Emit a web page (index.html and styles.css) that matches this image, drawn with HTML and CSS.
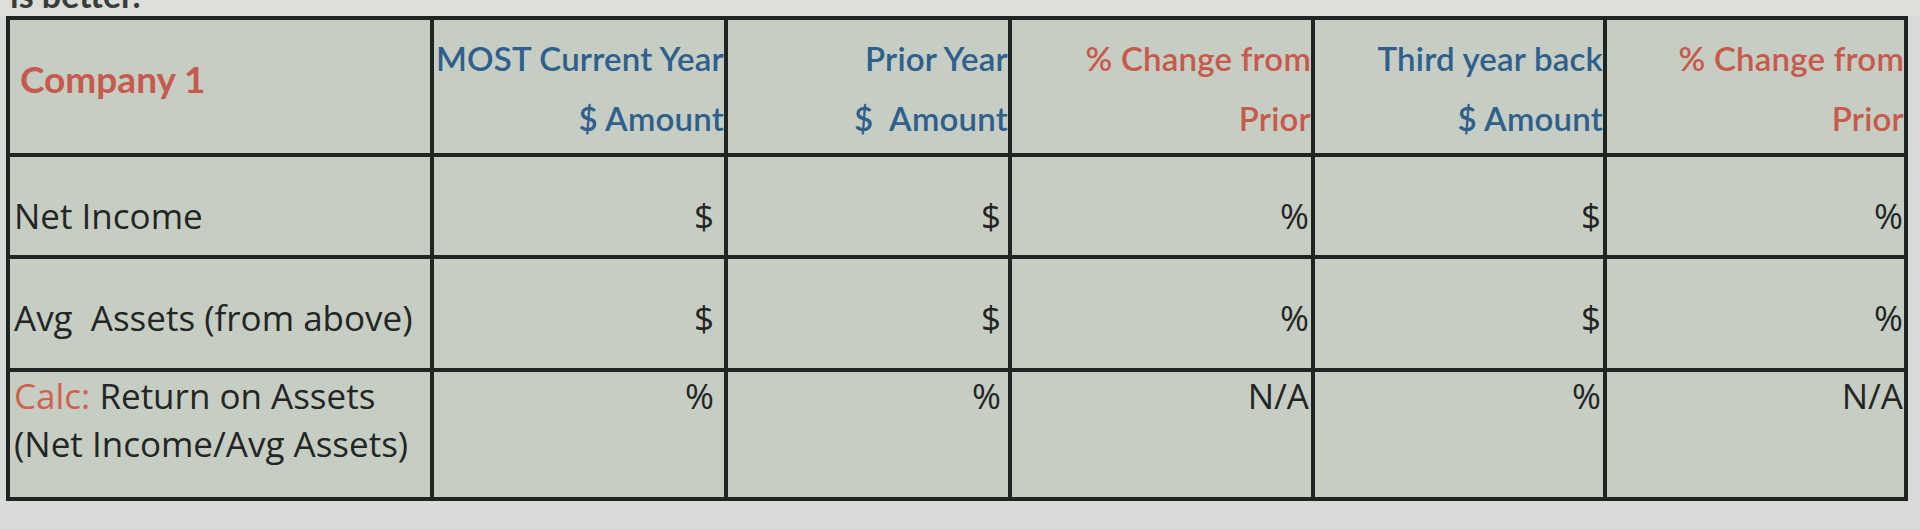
FILE: index.html
```html
<!DOCTYPE html>
<html>
<head>
<meta charset="utf-8">
<link rel="stylesheet" href="styles.css">
</head>
<body>
<div class="strip"><span class="cut">is better.</span></div>
<div class="sheet">
  <div class="cell company">Company 1</div>
  <div class="cell hd blue"><div>MOST Current Year</div><div>$ Amount</div></div>
  <div class="cell hd blue"><div>Prior Year</div><div>$  Amount</div></div>
  <div class="cell hd red"><div>% Change from</div><div>Prior</div></div>
  <div class="cell hd blue"><div>Third year back</div><div>$ Amount</div></div>
  <div class="cell hd red"><div>% Change from</div><div>Prior</div></div>

  <div class="cell row lbl">Net Income</div>
  <div class="cell row val c2">$</div>
  <div class="cell row val c3">$</div>
  <div class="cell row val c4">%</div>
  <div class="cell row val c5">$</div>
  <div class="cell row val c6">%</div>

  <div class="cell row lbl">Avg  Assets (from above)</div>
  <div class="cell row val c2">$</div>
  <div class="cell row val c3">$</div>
  <div class="cell row val c4">%</div>
  <div class="cell row val c5">$</div>
  <div class="cell row val c6">%</div>

  <div class="cell row3 lbl"><div><span class="calc">Calc:</span> Return on Assets</div><div>(Net Income/Avg Assets)</div></div>
  <div class="cell row3 val c2">%</div>
  <div class="cell row3 val c3">%</div>
  <div class="cell row3 val c4">N/A</div>
  <div class="cell row3 val c5">%</div>
  <div class="cell row3 val c6">N/A</div>
</div>
</body>
</html>
```
FILE: styles.css
```css
html, body {
  margin: 0;
  padding: 0;
}
body {
  background: #d8dbd7;
  font-family: Lato, "Open Sans", sans-serif;
  width: 1920px;
  height: 529px;
  overflow: hidden;
}
.strip {
  height: 16px;
  overflow: hidden;
  display: flex;
  align-items: flex-end;
  padding-left: 10px;
  background: #dcdeda;
}
.cut {
  font-size: 34px;
  line-height: 34px;
  margin-bottom: 4px;
  color: #3a3c3a;
  font-weight: 700;
}
.sheet {
  display: grid;
  grid-template-columns: 420px 290px 280px 299px 288px 297px;
  grid-template-rows: 133px 98px 109px 125px;
  gap: 4px;
  padding: 4px;
  margin-left: 6px;
  width: max-content;
  background: #1f2622;
}
.cell {
  background: #c6cdc3;
  overflow: hidden;
  white-space: pre;
}
.company {
  padding: 29px 0 0 10px;
  font-size: 37px;
  line-height: 60px;
  font-weight: 700;
  color: #c75a4c;
}
.hd {
  padding-top: 8px;
  text-align: right;
  font-size: 33px;
  line-height: 60px;
  font-weight: 600;
  letter-spacing: 0.2px;
}
.blue { color: #2f5f8c; }
.red { color: #c85a4c; }
.calc { color: #d0604f; }
.row, .row3 {
  font-family: "Open Sans", Lato, sans-serif;
  font-size: 35px;
  font-weight: 500;
  color: #232624;
}
.row {
  padding-top: 38px;
  line-height: 1.2;
}
.row3 {
  line-height: 48px;
}
.lbl {
  padding-left: 4px;
  text-align: left;
}
.val { text-align: right; }
.c2 { padding-right: 10px; }
.c3 { padding-right: 7px; }
.c4 { padding-right: 2px; }
.c5 { padding-right: 2px; }
.c6 { padding-right: 1px; }
```
